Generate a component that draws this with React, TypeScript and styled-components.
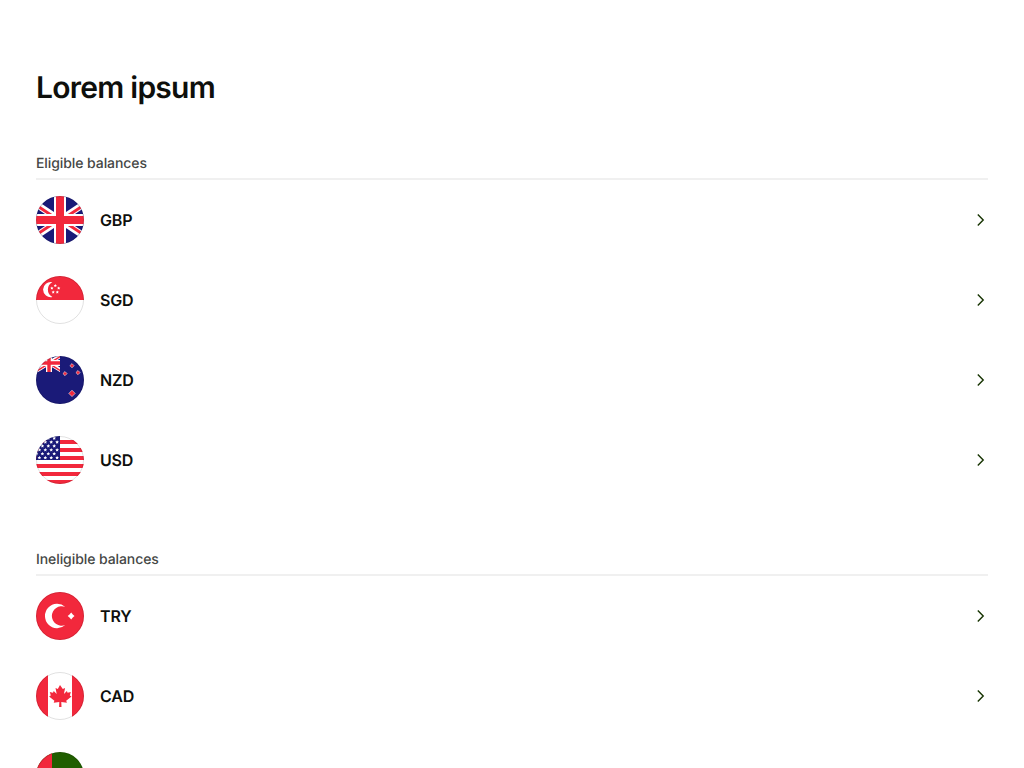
import React, { useId } from "react";
import styled, { createGlobalStyle } from "styled-components";

const GlobalStyle = createGlobalStyle`
  *, *::before, *::after { box-sizing: border-box; }
  body {
    margin: 0;
    background: #ffffff;
    color: #0e0f0c;
    font-family: Inter, "Liberation Sans", sans-serif;
    text-rendering: geometricPrecision;
    -webkit-font-smoothing: antialiased;
  }
`;

const Page = styled.main`
  padding: 68px 36px 48px;
`;

const Title = styled.h1`
  margin: 0 0 44px;
  font-size: 30px;
  line-height: 40px;
  font-weight: 600;
  letter-spacing: -0.025em;
`;

const Section = styled.section`
  margin-bottom: 48px;
`;

const SectionTitle = styled.h2`
  margin: 0;
  padding-bottom: 2px;
  border-bottom: 2px solid #f0f0f0;
  color: #454745;
  font-size: 14px;
  line-height: 24px;
  font-weight: 500;
  letter-spacing: -0.006em;
`;

const List = styled.ul`
  margin: 0;
  padding: 0;
  list-style: none;
`;

const Row = styled.button`
  display: flex;
  align-items: center;
  gap: 16px;
  width: 100%;
  padding: 16px 0;
  border: 0;
  background: transparent;
  color: inherit;
  font: inherit;
  text-align: left;
  text-rendering: inherit;
  cursor: pointer;
`;

const Code = styled.span`
  flex: 1;
  font-size: 16px;
  line-height: 16px;
  font-weight: 600;
  letter-spacing: -0.01em;
`;

const Badge = styled.svg`
  display: block;
  flex: none;
  width: 48px;
  height: 48px;
`;

const Chevron = styled.svg`
  display: block;
  flex: none;
  width: 16px;
  height: 16px;
`;

const RED = "#f2283c";
const NAVY = "#1a1a78";

function Flag({ children }: { children: React.ReactNode }) {
  const id = useId();
  return (
    <Badge viewBox="0 0 48 48" aria-hidden="true">
      <clipPath id={id}>
        <circle cx="24" cy="24" r="24" />
      </clipPath>
      <g clipPath={`url(#${id})`}>{children}</g>
      <circle cx="24" cy="24" r="23.5" fill="none" stroke="#000" strokeOpacity="0.12" />
    </Badge>
  );
}

function GbpFlag() {
  return (
    <Flag>
      <path fill={NAVY} d="M0 0h48v48H0z" />
      <path stroke="#fff" strokeWidth="6.6" d="M-12 0 60 48M60 0-12 48" />
      <path stroke={RED} strokeWidth="2.8" d="M-12 1 24 25M60 47 24 23M60 1 24 25M-12 47 24 23" />
      <path fill="#fff" d="M18 0h12v18h18v12H30v18H18V30H0V18h18z" />
      <path fill={RED} d="M20 0h8v20h20v8H28v20h-8V28H0v-8h20z" />
    </Flag>
  );
}

function starPath(x: number, y: number, r: number) {
  return (
    Array.from({ length: 10 }, (_, i) => {
      const a = (Math.PI * i) / 5 - Math.PI / 2;
      const d = i % 2 ? r * 0.5 : r;
      return `${i ? "L" : "M"}${x + d * Math.cos(a)} ${y + d * Math.sin(a)}`;
    }).join("") + "z"
  );
}

function SgdFlag() {
  const stars = [[19.3, 9.7], [15.9, 12.2], [22.7, 12.2], [17.2, 16.1], [21.3, 16.1]];
  return (
    <Flag>
      <path fill="#fff" d="M0 0h48v48H0z" />
      <path fill={RED} d="M0 0h48v24H0z" />
      <path fill="#fff" d="M16.4 6.2A7.6 7.6 0 1 0 16.4 21A8.3 8.3 0 0 1 16.4 6.2z" />
      <path fill="#fff" d={stars.map(([x, y]) => starPath(x, y, 1.7)).join("")} />
    </Flag>
  );
}

function NzdFlag() {
  const stars = [[36, 9.7, 2.1], [42, 16.6, 2.1], [29, 17.6, 2.1], [36, 37.4, 3.2]];
  return (
    <Flag>
      <path fill={NAVY} d="M0 0h48v48H0z" />
      <svg width="24" height="16" viewBox="0 0 24 16">
        <path stroke="#fff" strokeWidth="4" d="M0 -1 26 15M26 -1 0 15" />
        <path stroke={RED} strokeWidth="1.5" d="M0 -.5 26 15.5M26 -.5 0 15.5" />
        <path fill="#fff" d="M10 0h6v4h8v6h-8v6h-6v-6H0V4h10z" />
        <path fill={RED} d="M11.3 0h3.4v5.3H24v3.4h-9.3V16h-3.4V8.7H0V5.3h11.3z" />
      </svg>
      {stars.map(([x, y, r]) => (
        <path
          key={`${x}-${y}`}
          d={`M${x} ${y - r}l${r} ${r}l${-r} ${r}l${-r} ${-r}z`}
          fill={RED}
          stroke="#fff"
          strokeOpacity="0.6"
          strokeWidth="0.9"
        />
      ))}
    </Flag>
  );
}

function UsdFlag() {
  const stars: number[][] = [];
  for (let row = 0; row < 6; row++) {
    for (let col = 0; col < 4; col++) {
      stars.push([(row % 2 ? 3.4 : 0.5) + col * 5.9, 2.2 + row * 3.9]);
    }
  }
  return (
    <Flag>
      <path fill="#fff" d="M0 0h48v48H0z" />
      <path fill={RED} d="M0 4h48v4H0zM0 12h48v4H0zM0 20h48v4H0zM0 28h48v4H0zM0 36h48v4H0zM0 44h48v4H0z" />
      <path fill={NAVY} d="M0 0h24v24H0z" />
      <path fill="#fff" d={stars.map(([x, y]) => starPath(x, y, 1.9)).join("")} />
    </Flag>
  );
}

function TryFlag() {
  return (
    <Flag>
      <path fill={RED} d="M0 0h48v48H0z" />
      <path fill="#fff" d="M29.3 14.9A12.2 12.2 0 1 0 29.3 33.1A9.8 9.8 0 1 1 29.3 14.9z" />
      <path fill="#fff" d="M35.2 20.6 36.8 22.4 38.5 24 36.8 25.6 35.2 27.4 33.5 25.6 31.7 24 33.5 22.4z" />
    </Flag>
  );
}

function CadFlag() {
  return (
    <Flag>
      <path fill="#fff" d="M0 0h48v48H0z" />
      <path fill={RED} d="M0 0h12v48H0zM36 0h12v48H36z" />
      <path
        fill={RED}
        d="M24 13l-2.2 4-2.3-1.1 1.2 6.1-3-3-.7 1.7-3.2-.6 1 3.4-1.7.9 5.3 4.4-.7 2 5.6-.8-.2 5h2.4l-.2-5 5.6.8-.7-2 5.3-4.4-1.7-.9 1-3.4-3.2.6-.7-1.7-3 3 1.2-6.1-2.3 1.1z"
      />
    </Flag>
  );
}

function PortugalFlag() {
  return (
    <Flag>
      <path fill="#205e00" d="M0 0h48v48H0z" />
      <path fill={RED} d="M0 0h16v48H0z" />
      <circle cx="16" cy="24" r="6.5" fill="#ffda2c" />
      <path fill={RED} d="M12.5 20h7v5a3.5 3.5 0 0 1-7 0z" />
      <path fill="#fff" d="M14.5 22h3v3a1.5 1.5 0 0 1-3 0z" />
    </Flag>
  );
}

type Balance = { code: string; flag: () => React.ReactElement };

const eligible: Balance[] = [
  { code: "GBP", flag: GbpFlag },
  { code: "SGD", flag: SgdFlag },
  { code: "NZD", flag: NzdFlag },
  { code: "USD", flag: UsdFlag },
];

const ineligible: Balance[] = [
  { code: "TRY", flag: TryFlag },
  { code: "CAD", flag: CadFlag },
  { code: "PTE", flag: PortugalFlag },
];

function BalanceSection({ title, items }: { title: string; items: Balance[] }) {
  return (
    <Section>
      <SectionTitle>{title}</SectionTitle>
      <List>
        {items.map(({ code, flag: FlagIcon }) => (
          <li key={code}>
            <Row type="button">
              <FlagIcon />
              <Code>{code}</Code>
              <Chevron viewBox="0 0 16 16" fill="none" stroke="#163300" strokeWidth="1.4" aria-hidden="true">
                <path d="M5.8 2.6 11.2 8l-5.4 5.4" />
              </Chevron>
            </Row>
          </li>
        ))}
      </List>
    </Section>
  );
}

export default function App() {
  return (
    <>
      <GlobalStyle />
      <Page>
        <Title>Lorem ipsum</Title>
        <BalanceSection title="Eligible balances" items={eligible} />
        <BalanceSection title="Ineligible balances" items={ineligible} />
      </Page>
    </>
  );
}
